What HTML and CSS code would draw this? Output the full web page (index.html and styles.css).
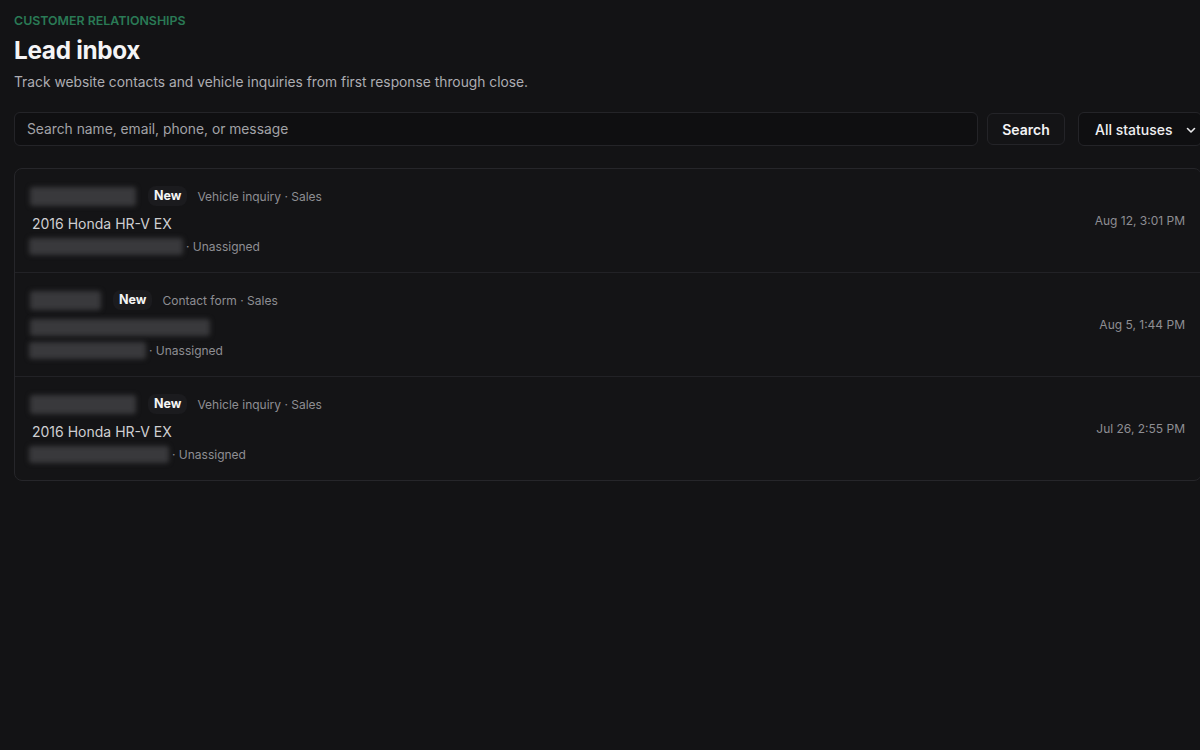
FILE: index.html
```html
<!DOCTYPE html>
<html lang="en">
<head>
<meta charset="utf-8">
<title>Lead inbox</title>
<link rel="stylesheet" href="styles.css">
</head>
<body>
<main class="page">
  <header class="head">
    <p class="eyebrow">CUSTOMER RELATIONSHIPS</p>
    <h1 class="title">Lead inbox</h1>
    <p class="subtitle">Track website contacts and vehicle inquiries from first response through close.</p>
  </header>

  <form class="toolbar" onsubmit="return false">
    <input class="search" type="text" placeholder="Search name, email, phone, or message">
    <button class="btn" type="submit">Search</button>
    <div class="select">
      <span>All statuses</span>
      <svg class="chev" viewBox="0 0 12 12" width="12" height="12"><path d="M2.5 4.5 6 8l3.5-3.5" fill="none" stroke="#e8e8ea" stroke-width="1.6" stroke-linecap="round" stroke-linejoin="round"/></svg>
    </div>
  </form>

  <section class="list">
    <article class="row">
      <div class="info">
        <div class="line top">
          <span class="redact name" style="width:106px"></span>
          <span class="badge">New</span>
          <span class="meta">Vehicle inquiry · Sales</span>
        </div>
        <div class="line subject">2016 Honda HR-V EX</div>
        <div class="line foot">
          <span class="redact small" style="width:154px"></span>
          <span class="meta">· Unassigned</span>
        </div>
      </div>
      <time class="date">Aug 12, 3:01 PM</time>
    </article>

    <article class="row">
      <div class="info">
        <div class="line top">
          <span class="redact name" style="width:71px"></span>
          <span class="badge">New</span>
          <span class="meta">Contact form · Sales</span>
        </div>
        <div class="line subject"><span class="redact wide" style="width:180px"></span></div>
        <div class="line foot">
          <span class="redact small" style="width:117px"></span>
          <span class="meta">· Unassigned</span>
        </div>
      </div>
      <time class="date">Aug 5, 1:44 PM</time>
    </article>

    <article class="row">
      <div class="info">
        <div class="line top">
          <span class="redact name" style="width:106px"></span>
          <span class="badge">New</span>
          <span class="meta">Vehicle inquiry · Sales</span>
        </div>
        <div class="line subject">2016 Honda HR-V EX</div>
        <div class="line foot">
          <span class="redact small" style="width:140px"></span>
          <span class="meta">· Unassigned</span>
        </div>
      </div>
      <time class="date">Jul 26, 2:55 PM</time>
    </article>
  </section>
</main>
</body>
</html>
```

FILE: styles.css
```css
html, body {
  margin: 0;
  padding: 0;
  background: #131315;
  overflow: hidden;
}
body {
  font-family: Inter, "Liberation Sans", sans-serif;
  color: #e8e8ea;
  width: 1200px;
  height: 750px;
}
.page {
  width: 1188px;
  padding: 14px 0 0 14px;
  box-sizing: content-box;
}
.head {
  display: flex;
  flex-direction: column;
}
.eyebrow {
  margin: 0;
  font-size: 12.4px;
  font-weight: 600;
  color: #2a7a55;
  line-height: 14px;
}
.title {
  margin: 7px 0 0;
  font-size: 24.3px;
  font-weight: 700;
  color: #f4f4f5;
  line-height: 30px;
  letter-spacing: -0.3px;
}
.subtitle {
  margin: 7px 0 0;
  font-size: 13.8px;
  color: #adadb2;
  line-height: 20px;
}
.toolbar {
  display: flex;
  align-items: center;
  gap: 9px;
  margin-top: 20px;
}
.search {
  flex: 1;
  height: 34px;
  box-sizing: border-box;
  background: #0f0f11;
  border: 1px solid #242428;
  border-radius: 6px;
  padding: 0 12px;
  font: 13.8px Inter, "Liberation Sans", sans-serif;
  color: #e8e8ea;
  outline: none;
}
.search::placeholder { color: #a2a2a7; }
.btn {
  height: 32px;
  width: 78px;
  background: #141416;
  border: 1px solid #242428;
  border-radius: 6px;
  color: #f4f4f5;
  font: 600 14px Inter, "Liberation Sans", sans-serif;
  padding: 0;
}
.select {
  margin-left: 4px;
  width: 124px;
  height: 34px;
  box-sizing: border-box;
  border: 1px solid #242428;
  border-radius: 6px;
  background: #0f0f11;
  display: flex;
  align-items: center;
  justify-content: space-between;
  padding: 1px 4px 0 16px;
  font-size: 14px;
  font-weight: 500;
  color: #f0f0f2;
}
.chev { display: block; }
.list {
  margin-top: 22px;
  border: 1px solid #26262a;
  border-radius: 8px;
  background: #141416;
}
.row {
  display: flex;
  align-items: center;
  justify-content: space-between;
  height: 104px;
  box-sizing: border-box;
  padding: 0 16px 0 16px;
  border-top: 1px solid #222226;
}
.row:first-child { border-top: none; height: 103px; }
.info {
  display: flex;
  flex-direction: column;
}
.line {
  display: flex;
  align-items: center;
}
.top { height: 22px; }
.subject {
  height: 26px;
  margin-top: 3px;
  font-size: 14px;
  color: #cfcfd2;
  padding-left: 1px;
}
.foot { height: 20px; }
.redact {
  display: inline-block;
  background: #39393c;
  border-radius: 3px;
  filter: blur(2.5px);
}
.redact.name { height: 19px; margin-left: -1px; }
.redact.wide { height: 17px; margin-left: -2px; }
.redact.small { height: 17px; margin-right: 3px; margin-left: -2px; }
.badge {
  margin-left: 12px;
  background: #1b1b1e;
  border-radius: 8px;
  padding: 2px 6px;
  font-size: 12.5px;
  font-weight: 700;
  color: #f4f4f5;
  line-height: 16px;
}
.meta {
  font-size: 12px;
  color: #8e8e93;
}
.top .meta { margin-left: 10px; }
.date {
  font-size: 12px;
  color: #8e8e93;
  margin-right: 0;
}
```
